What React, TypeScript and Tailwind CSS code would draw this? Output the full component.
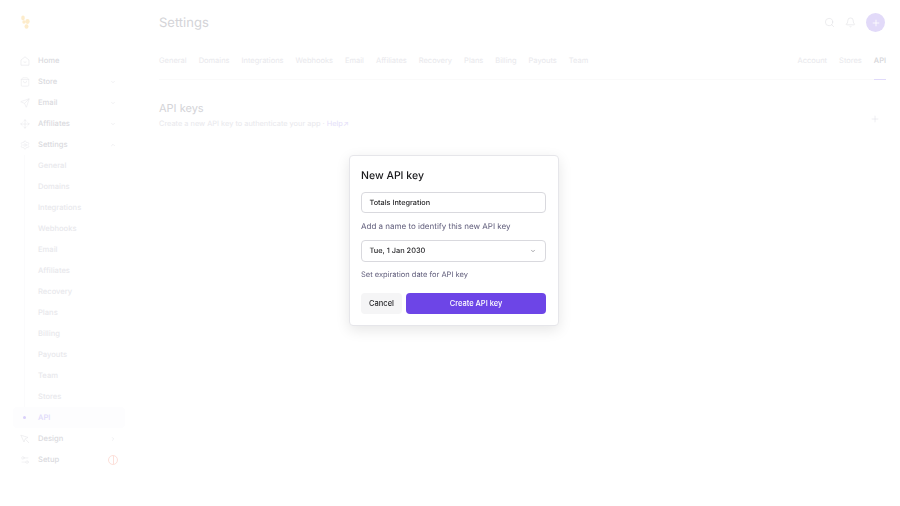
import { Bell, ChevronDown, ChevronRight, ChevronUp, Move, Plus, Search, Send, Settings, Settings2, ShoppingBag } from "lucide-react";

const subItems = ["General", "Domains", "Integrations", "Webhooks", "Email", "Affiliates", "Recovery", "Plans", "Billing", "Payouts", "Team", "Stores"];
const tabs = ["General", "Domains", "Integrations", "Webhooks", "Email", "Affiliates", "Recovery", "Plans", "Billing", "Payouts", "Team"];

function NavRow({ icon, label, chevron }: { icon: React.ReactNode; label: string; chevron?: React.ReactNode }) {
  return (
    <div className="h-[21px] flex items-center pl-[20px] pr-[43px] text-[7.6px] font-medium text-[#dadade]">
      <span className="w-[18px] flex items-center text-[#e6e6ea]">{icon}</span>
      <span className="flex-1">{label}</span>
      {chevron}
    </div>
  );
}

export default function App() {
  const ic = "w-[10px] h-[10px]";
  const ch = "w-[6px] h-[6px] text-[#e2e2e6]";
  return (
    <div className="relative w-[900px] h-[506px] overflow-hidden bg-white flex font-['Inter',sans-serif] [text-rendering:geometricPrecision]">
      <aside className="w-[159px] shrink-0 flex flex-col">
        <div className="h-[50px] pl-[20px] pt-[15px]">
          <svg width="11" height="15" viewBox="0 0 11 15" fill="#fdeccb">
            <ellipse cx="3" cy="3" rx="1.8" ry="2.4" />
            <ellipse cx="7.5" cy="6.5" rx="2.2" ry="2.4" />
            <circle cx="4" cy="7" r="1.7" />
            <ellipse cx="6.5" cy="11.5" rx="2" ry="2.2" />
          </svg>
        </div>
        <NavRow
          icon={
            <svg className={ic} viewBox="0 0 10 10" fill="none" stroke="currentColor" strokeWidth="0.6">
              <path d="M1 4 5 .8 9 4v5.2H1Z" strokeLinejoin="round" />
              <path d="M3.6 5.8q1.4 1.2 2.8 0" />
            </svg>
          }
          label="Home"
        />
        <NavRow icon={<ShoppingBag className={ic} strokeWidth={1.3} />} label="Store" chevron={<ChevronDown className={ch} />} />
        <NavRow icon={<Send className={ic} strokeWidth={1.3} />} label="Email" chevron={<ChevronDown className={ch} />} />
        <NavRow icon={<Move className={ic} strokeWidth={1.3} />} label="Affiliates" chevron={<ChevronDown className={ch} />} />
        <NavRow icon={<Settings className={ic} strokeWidth={1.3} />} label="Settings" chevron={<ChevronUp className={ch} />} />
        <div className="ml-[24px] border-l border-[#fbfbfc]">
          {subItems.map((s) => (
            <div key={s} className="h-[21px] flex items-center pl-[13px] text-[7.6px] font-medium text-[#e8e8ec]">{s}</div>
          ))}
        </div>
        <div className="h-[21px] w-[112px] ml-[13px] rounded-[4px] bg-[#fdfdfe] flex items-center pl-[10px] text-[7.6px] font-medium text-[#e0dafa]">
          <span className="w-[3px] h-[3px] rounded-full bg-[#d9d0fa] mr-[12px]" />
          API
        </div>
        <NavRow
          icon={
            <svg className={ic} viewBox="0 0 10 10" fill="none" stroke="currentColor" strokeWidth="0.6">
              <path d="M.8 1.2 8 3.4 5.2 4.8 4 8Z" strokeLinejoin="round" />
              <path d="M5.6 5.4 9 9" />
            </svg>
          }
          label="Design"
          chevron={<ChevronRight className={ch} />}
        />
        <div className="h-[21px] flex items-center pl-[20px] pr-[41px] text-[7.6px] font-medium text-[#dadade]">
          <span className="w-[18px] flex items-center text-[#e6e6ea]"><Settings2 className={ic} strokeWidth={1.3} /></span>
          <span className="flex-1">Setup</span>
          <span className="w-[10px] h-[10px] rounded-full border border-[#fde0da] flex justify-center">
            <span className="w-px h-full bg-[#fde0da]" />
          </span>
        </div>
      </aside>

      <main className="flex-1 pr-[14px] flex flex-col">
        <header className="h-[46px] flex items-center justify-between">
          <h1 className="text-[13px] leading-none text-[#d4d4d8]">Settings</h1>
          <div className="flex items-center gap-[10px] mr-[1px] -mt-[1px]">
            <Search className="w-[11px] h-[11px] text-[#e0e0e4]" strokeWidth={1.3} />
            <Bell className="w-[11px] h-[11px] text-[#e0e0e4]" strokeWidth={1.3} />
            <span className="w-[19px] h-[19px] rounded-full bg-[#e2daf9] flex items-center justify-center">
              <Plus className="w-[10px] h-[10px] text-white" />
            </span>
          </div>
        </header>
        <nav className="h-[34px] border-b border-[#fafafa] flex justify-between text-[7.5px] pt-[9px] text-[#e8e8ec]">
          <div className="flex gap-[12px]">
            {tabs.map((t) => <span key={t}>{t}</span>)}
          </div>
          <div className="flex gap-[12px]">
            <span>Account</span>
            <span>Stores</span>
            <span className="relative font-medium text-[#d4d4d8]">
              API
              <span className="absolute left-0 right-0 top-[24px] h-px bg-[#e0dafa]" />
            </span>
          </div>
        </nav>
        <section className="flex items-center justify-between mt-[22px] pr-[6px]">
          <div>
            <h2 className="text-[11px] leading-[13px] text-[#d4d4d8]">API keys</h2>
            <p className="text-[7.4px] leading-[10px] mt-[4px] text-[#e8e8ec]">
              Create a new API key to authenticate your app · <span className="text-[#e4def9]">Help↗</span>
            </p>
          </div>
          <Plus className="w-[10px] h-[10px] text-[#e2e2e6] mt-[6px]" strokeWidth={1.3} />
        </section>
      </main>

      <div className="fixed inset-0 pl-[348.5px] pt-[155px]">
        <div className="w-[210px] h-[171px] rounded-[4px] bg-white border border-[#e6e6ea] shadow-[0_4px_14px_rgba(0,0,0,0.1)] px-[11.5px] pt-[13px]">
          <h3 className="text-[10.5px] leading-[14px] font-medium text-[#18181b]">New API key</h3>
          <div className="mt-[9px] h-[21px] rounded-[4px] border border-[#d9d9de] flex items-center pl-[7.5px] pt-[1px] text-[7.3px] font-medium text-[#27272a]">Totals Integration</div>
          <p className="mt-[8px] text-[8px] leading-[10px] text-[#5f5c7a]">Add a name to identify this new API key</p>
          <div className="mt-[8.5px] h-[22px] rounded-[4px] border border-[#d9d9de] flex items-center justify-between pl-[7.5px] pr-[9px] pt-[1px] text-[7.4px] font-medium text-[#27272a]">
            Tue, 1 Jan 2030
            <ChevronDown className="w-[6px] h-[6px] text-[#52525b]" />
          </div>
          <p className="mt-[8px] text-[7.5px] leading-[10px] text-[#5f5c7a]">Set expiration date for API key</p>
          <div className="mt-[13.5px] flex gap-[4px] text-[7.5px] font-medium">
            <button className="w-[41px] h-[21px] rounded-[4px] bg-[#f5f5f6] text-[#27272a]">Cancel</button>
            <button className="flex-1 h-[21px] rounded-[4px] bg-[#6d45e7] text-white">Create API key</button>
          </div>
        </div>
      </div>
    </div>
  );
}
